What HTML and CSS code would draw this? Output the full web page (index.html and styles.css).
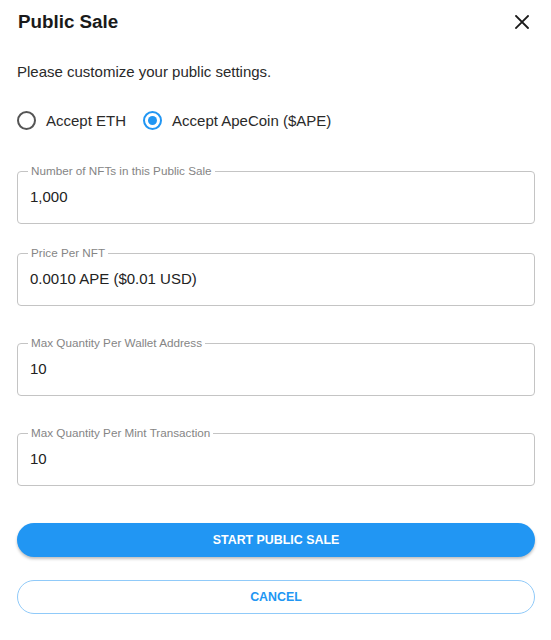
FILE: index.html
```html
<!DOCTYPE html>
<html>
<head>
<meta charset="utf-8">
<link rel="stylesheet" href="styles.css">
</head>
<body>
<div class="dialog">
  <div class="header">
    <h1 class="title">Public Sale</h1>
    <button class="close" aria-label="Close">
      <svg width="14" height="14" viewBox="0 0 14 14"><path d="M1 1L13 13M13 1L1 13" stroke="#1a1a1a" stroke-width="1.8" stroke-linecap="square"/></svg>
    </button>
  </div>
  <p class="subtitle">Please customize your public settings.</p>
  <div class="radios">
    <label class="radio"><span class="circle"></span>Accept ETH</label>
    <label class="radio"><span class="circle checked"></span>Accept ApeCoin ($APE)</label>
  </div>
  <fieldset class="field f1">
    <legend>Number of NFTs in this Public Sale</legend>
    <div class="value">1,000</div>
  </fieldset>
  <fieldset class="field f2">
    <legend>Price Per NFT</legend>
    <div class="value">0.0010 APE ($0.01 USD)</div>
  </fieldset>
  <fieldset class="field f3">
    <legend>Max Quantity Per Wallet Address</legend>
    <div class="value">10</div>
  </fieldset>
  <fieldset class="field f4">
    <legend>Max Quantity Per Mint Transaction</legend>
    <div class="value">10</div>
  </fieldset>
  <button class="btn primary">START PUBLIC SALE</button>
  <button class="btn outline">CANCEL</button>
</div>
</body>
</html>
```
FILE: styles.css
```css
* { box-sizing: border-box; }
html, body { margin: 0; padding: 0; background: #fff; }
body { font-family: "Liberation Sans", Arial, sans-serif; color: #222; }
.dialog { width: 551px; height: 640px; padding: 0 16px 0 17px; display: flex; flex-direction: column; }
.header { display: flex; justify-content: space-between; align-items: center; height: 44px; }
.title { margin: 0 0 0 1px; font-size: 18.8px; font-weight: 700; color: #1a1a1a; line-height: 44px; }
.close { border: 0; background: none; padding: 0; margin-right: 6px; display: flex; align-items: center; cursor: pointer; }
.subtitle { margin: 18px 0 0 0; font-size: 15px; line-height: 20px; color: #2a2a2a; }
.radios { display: flex; align-items: center; gap: 17px; margin-top: 27px; height: 22px; }
.radio { display: flex; align-items: center; font-size: 15px; color: #2a2a2a; }
.circle { width: 19px; height: 19px; border: 2px solid #555; border-radius: 50%; margin-right: 10px; display: inline-flex; align-items: center; justify-content: center; }
.circle.checked { border-color: #2196f3; }
.circle.checked::after { content: ""; width: 9px; height: 9px; border-radius: 50%; background: #2196f3; }
.field { margin: 0; padding: 0 12px; border: 1px solid #c4c4c4; border-radius: 4px; height: 59px; position: relative; }
.field legend { font-size: 11.7px; color: #858585; padding: 0 3px; margin-left: -2px; line-height: 12px; }
.value { font-size: 15px; color: #222; padding-top: 11px; }
.f1 { margin-top: 34px; }
.f2 { margin-top: 23px; }
.f3 { margin-top: 31px; }
.f4 { margin-top: 31px; }
.btn { width: 518px; height: 34px; flex: none; border-radius: 17px; font-family: "Liberation Sans", Arial, sans-serif; font-weight: 700; font-size: 12.4px; cursor: pointer; }
.primary { margin-top: 37px; background: #2196f3; color: #fff; border: 0; box-shadow: 0 2px 3px rgba(0,0,0,0.25); }
.outline { margin-top: 23px; background: #fff; color: #2196f3; border: 1px solid #90caf9; }
```
